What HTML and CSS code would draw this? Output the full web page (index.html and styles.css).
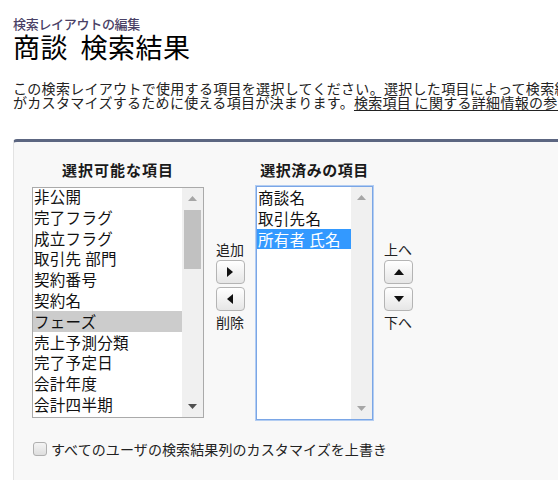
FILE: index.html
```html
<!DOCTYPE html>
<html lang="ja">
<head>
<meta charset="utf-8">
<title>商談 検索結果</title>
<link rel="stylesheet" href="styles.css">
</head>
<body>
<div class="page">
  <div class="crumb">検索レイアウトの編集</div>
  <h1 class="title">商談 検索結果</h1>
  <p class="desc">
    <span class="line">この検索レイアウトで使用する項目を選択してください。選択した項目によって検索結果でユーザ</span>
    <span class="line">がカスタマイズするために使える項目が決まります。<a class="help" href="#">検索項目 に関する詳細情報の参照</a></span>
  </p>
  <div class="panel">
    <div class="duel">
      <div class="col-head head-avail">選択可能な項目</div>
      <div class="col-head head-sel">選択済みの項目</div>

      <div class="listbox list-avail">
        <div class="options">
          <div class="opt">非公開</div>
          <div class="opt">完了フラグ</div>
          <div class="opt">成立フラグ</div>
          <div class="opt">取引先 部門</div>
          <div class="opt">契約番号</div>
          <div class="opt">契約名</div>
          <div class="opt opt-grey">フェーズ</div>
          <div class="opt">売上予測分類</div>
          <div class="opt">完了予定日</div>
          <div class="opt">会計年度</div>
          <div class="opt">会計四半期</div>
        </div>
        <div class="sb">
          <svg class="sb-arrow up light" width="9" height="5" viewBox="0 0 9 5"><polygon points="0,5 9,5 4.5,0"/></svg>
          <div class="sb-track"><div class="sb-thumb"></div></div>
          <svg class="sb-arrow dark" width="9" height="5" viewBox="0 0 9 5"><polygon points="0,0 9,0 4.5,5"/></svg>
        </div>
      </div>

      <div class="btns btns-add">
        <span class="btn-label">追加</span>
        <span class="btn"><svg width="6" height="10" viewBox="0 0 6 10"><polygon points="0,0 6,5 0,10"/></svg></span>
        <span class="btn"><svg width="6" height="10" viewBox="0 0 6 10"><polygon points="6,0 0,5 6,10"/></svg></span>
        <span class="btn-label">削除</span>
      </div>

      <div class="listbox list-sel">
        <div class="options">
          <div class="opt">商談名</div>
          <div class="opt">取引先名</div>
          <div class="opt opt-blue">所有者 氏名</div>
        </div>
        <div class="sb">
          <svg class="sb-arrow up light" width="9" height="5" viewBox="0 0 9 5"><polygon points="0,5 9,5 4.5,0"/></svg>
          <div class="sb-track"></div>
          <svg class="sb-arrow light" width="9" height="5" viewBox="0 0 9 5"><polygon points="0,0 9,0 4.5,5"/></svg>
        </div>
      </div>

      <div class="btns btns-order">
        <span class="btn-label">上へ</span>
        <span class="btn"><svg width="10" height="6" viewBox="0 0 10 6"><polygon points="0,6 10,6 5,0"/></svg></span>
        <span class="btn"><svg width="10" height="6" viewBox="0 0 10 6"><polygon points="0,0 10,0 5,6"/></svg></span>
        <span class="btn-label">下へ</span>
      </div>
    </div>

    <label class="override"><span class="cb"></span><span class="override-text">すべてのユーザの検索結果列のカスタマイズを上書き</span></label>
  </div>
</div>
</body>
</html>
```

FILE: styles.css
```css
html, body {
  margin: 0;
  padding: 0;
  background: #ffffff;
  overflow: hidden;
}

body {
  width: 558px;
  height: 480px;
  font-family: "Noto Sans CJK JP", "Noto Sans", sans-serif;
  color: #111;
}

.page {
  padding: 16px 0 0 13px;
}

.crumb {
  font-size: 13px;
  line-height: 15px;
  color: #4a4166;
  font-weight: 500;
  letter-spacing: -0.3px;
}

.title {
  margin: 0;
  font-size: 27px;
  line-height: 31px;
  font-weight: 400;
  color: #000;
  letter-spacing: 0.5px;
  word-spacing: 6px;
}

.desc {
  margin: 19px 0 0 0;
  font-size: 14px;
  line-height: 14px;
  color: #222;
  letter-spacing: 0.3px;
}

.line {
  display: block;
  white-space: nowrap;
}

.help {
  color: #222;
  text-decoration: underline;
  text-underline-offset: 2px;
}

.panel {
  margin-top: 30px;
  height: 360px;
  background: #f8f8f8;
  border-top: 3px solid #5c6681;
  border-left: 1px solid #e3e3e3;
  border-top-left-radius: 4px;
  padding: 0 0 0 18px;
}

.duel {
  display: grid;
  grid-template-columns: 172px 52px 117px 56px;
  grid-template-rows: 45px 234px;
  align-items: end;
}

.col-head {
  font-size: 15px;
  font-weight: 700;
  color: #1a1a1a;
  text-align: center;
  line-height: 18px;
  padding-bottom: 8px;
}

.head-avail { grid-column: 1; grid-row: 1; letter-spacing: 1px; }
.head-sel { grid-column: 3; grid-row: 1; letter-spacing: 0.5px; }

.listbox {
  grid-row: 2;
  align-self: start;
  display: flex;
  background: #fff;
  box-sizing: border-box;
}

.list-avail {
  grid-column: 1;
  border: 1px solid #aaaaaa;
  height: 231px;
}

.list-sel {
  grid-column: 3;
  border: 1px solid #7aa6e6;
  box-shadow: 0 0 0 1px #b3cdf2;
  height: 234px;
  margin-top: -1px;
}

.options {
  flex: 1;
  overflow: hidden;
  font-size: 15.5px;
  color: #111;
}

.opt {
  height: 20.8px;
  line-height: 20.8px;
  padding-left: 1px;
  white-space: nowrap;
  letter-spacing: 0.3px;
}

.list-avail .opt:first-child {
  margin-top: -2px;
}

.opt-grey {
  background: #cccccc;
}

.opt-blue {
  background: #3399ff;
  color: #fff;
}

.sb {
  width: 21px;
  background: #f0f0f0;
  display: flex;
  flex-direction: column;
  align-items: center;
}

.sb-arrow {
  flex: none;
  margin: 8px 0;
}

.sb-arrow.light polygon { fill: #a6a6a6; }
.sb-arrow.dark polygon { fill: #505050; }

.sb-track {
  flex: 1;
  width: 100%;
  display: flex;
  justify-content: center;
}

.sb-thumb {
  width: 17px;
  height: 59px;
  margin-top: 1px;
  background: #c1c1c1;
}

.btns {
  grid-row: 2;
  align-self: start;
  display: flex;
  flex-direction: column;
  align-items: center;
  padding-top: 53px;
}

.btns-add { grid-column: 2; }

.btns-order {
  grid-column: 4;
  align-items: flex-start;
  padding-left: 11px;
}

.btn-label {
  font-size: 14px;
  line-height: 19px;
  color: #222;
}

.btn {
  width: 29px;
  height: 24px;
  box-sizing: border-box;
  border: 1px solid #b4b4b4;
  border-radius: 4px;
  background: linear-gradient(#ffffff, #e6e6e6);
  display: flex;
  align-items: center;
  justify-content: center;
  margin: 1px 0 2px;
}

.btn polygon { fill: #111; }

.override {
  display: flex;
  align-items: center;
  margin-top: 20px;
  margin-left: 1px;
  font-size: 14px;
  color: #222;
}

.cb {
  width: 12px;
  height: 12px;
  border: 1px solid #b0b0b0;
  border-radius: 3px;
  background: linear-gradient(#f4f4f4, #dedede);
  margin-right: 4px;
}

.override-text {
  line-height: 16px;
  letter-spacing: 0.1px;
}
```
